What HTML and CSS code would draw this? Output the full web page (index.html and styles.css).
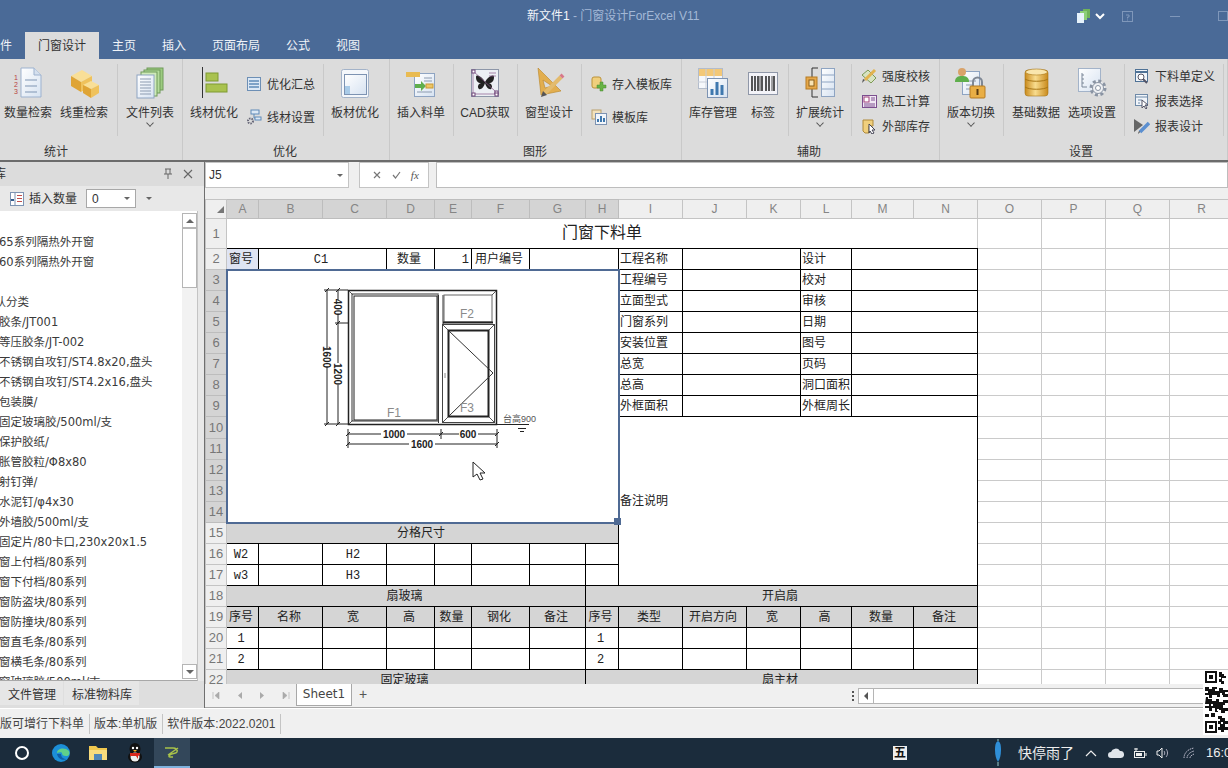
FILE: index.html
```html
<!DOCTYPE html>
<html lang="zh-CN">
<head>
    <meta charset="UTF-8">
    <title>门窗设计ForExcel V11</title>
    <link rel="stylesheet" href="styles.css">
</head>
<body>
    <svg class="defs" width="0" height="0">
        <defs>
            <linearGradient id="gold" x1="0" y1="0" x2="1" y2="0">
                <stop offset="0" stop-color="#c98a1c"/>
                <stop offset=".45" stop-color="#f8dc8e"/>
                <stop offset="1" stop-color="#c98a1c"/>
            </linearGradient>
            <linearGradient id="sheet" x1="0" y1="0" x2="1" y2="1">
                <stop offset="0" stop-color="#ffffff"/>
                <stop offset="1" stop-color="#d6e2f1"/>
            </linearGradient>
        </defs>
    </svg>

    <!-- title bar and tabs -->
    <header class="titlebar">
        <div class="title-row">
            <div class="title-text">新文件1<span class="title-dim"> - 门窗设计ForExcel V11</span></div>
            <div class="win-btns">
                <svg class="win-stack" width="18" height="16" viewBox="0 0 18 16"><rect x="8" y="1" width="7" height="9" fill="#6fb35a"/><rect x="5" y="3" width="7" height="9" fill="#8ccf78"/><rect x="2" y="5" width="7" height="10" fill="#e6f2fb"/></svg>
                <svg class="win-chev" width="10" height="8" viewBox="0 0 10 8"><path d="M1 2l4 4 4-4" fill="none" stroke="#fff" stroke-width="2"/></svg>
                <svg class="win-help" width="11" height="11" viewBox="0 0 11 11"><rect x=".5" y=".5" width="10" height="10" fill="none" stroke="#7f97ba"/><path d="M4 4h3v2H5.500v1.500M5.500 8.500v1" fill="none" stroke="#7f97ba"/></svg>
                <div class="win-min"></div>
                <div class="win-max"></div>
            </div>
        </div>
        <nav class="tabs">
            <span class="tab tab-file">文件</span>
            <span class="tab active">门窗设计</span>
            <span class="tab">主页</span>
            <span class="tab">插入</span>
            <span class="tab">页面布局</span>
            <span class="tab">公式</span>
            <span class="tab">视图</span>
        </nav>
    </header>

    <!-- ribbon -->
    <section class="ribbon">
        <div class="group g-stat">
            <div class="group-body">
                <div class="big">
                    <svg width="32" height="32" viewBox="0 0 32 32"><path d="M9 1h13l7 7v22H9z" fill="url(#sheet)" stroke="#9db2cf"/><path d="M22 1v7h7" fill="#d5e0ee" stroke="#9db2cf"/><path d="M13 13h12M13 19h12M13 25h12" stroke="#7f95b3"/><text x="2" y="13" class="ico-num">1</text><text x="2" y="20" class="ico-num">2</text><text x="2" y="27" class="ico-num">3</text></svg>
                    <span>数量检索</span>
                </div>
                <div class="big">
                    <svg width="32" height="32" viewBox="0 0 32 32"><path d="M3 9l11-6 10 6-11 6z" fill="#f9df97"/><path d="M3 9l10 6v10L3 19z" fill="#dfa435"/><path d="M13 15l11-6v10l-11 6z" fill="#efc25c"/><path d="M15 18l8-4 8 4-8 4z" fill="#f9df97"/><path d="M15 18l8 4v9l-8-5z" fill="#dfa435"/><path d="M23 22l8-4v8l-8 5z" fill="#efc25c"/></svg>
                    <span>线重检索</span>
                </div>
                <div class="sep sep-a"></div>
                <div class="big">
                    <svg width="32" height="32" viewBox="0 0 32 32"><rect x="13" y="1" width="16" height="22" fill="#9ccb80" stroke="#6f9a58"/><rect x="10" y="3" width="16" height="23" fill="#b5dc9c" stroke="#6f9a58"/><rect x="7" y="5" width="16" height="24" fill="#cfeab9" stroke="#6f9a58"/><rect x="3" y="8" width="17" height="23" fill="url(#sheet)" stroke="#8ea4c2"/><path d="M6 12h11M6 15h11M6 18h11M6 21h11M6 24h11M6 27h11" stroke="#8c9bb0"/></svg>
                    <span>文件列表</span>
                    <i class="chev"></i>
                </div>
            </div>
            <div class="group-label">统计</div>
        </div>

        <div class="group g-opt">
            <div class="group-body">
                <div class="big">
                    <svg width="32" height="32" viewBox="0 0 32 32"><path d="M4.500 0v31" stroke="#333"/><rect x="8" y="6" width="12" height="8" fill="#a9c24f" stroke="#7f9a33"/><rect x="8" y="17" width="21" height="8" fill="#a9c24f" stroke="#7f9a33"/></svg>
                    <span>线材优化</span>
                </div>
                <div class="smalls two">
                    <div class="small">
                        <svg width="16" height="16" viewBox="0 0 16 16"><rect x="1.500" y="1.500" width="13" height="13" fill="#dce8f5" stroke="#6d8fb5"/><path d="M3 5h10M3 8h10M3 11h10" stroke="#5f8ab8" stroke-width="1.500"/></svg>
                        <span>优化汇总</span>
                    </div>
                    <div class="small">
                        <svg width="16" height="16" viewBox="0 0 16 16"><rect x="5" y="1" width="8" height="4" fill="#dce8f5" stroke="#5f8ab8"/><rect x="9" y="8" width="6" height="3" fill="#dce8f5" stroke="#5f8ab8"/><path d="M8 5v4h1" fill="none" stroke="#5f8ab8"/><circle cx="4.500" cy="12" r="2.500" fill="none" stroke="#667" stroke-width="2" stroke-dasharray="1.500 1"/></svg>
                        <span>线材设置</span>
                    </div>
                </div>
                <div class="sep sep-b"></div>
                <div class="big">
                    <svg width="32" height="32" viewBox="0 0 32 32"><rect x="2.500" y="2.500" width="27" height="28" rx="2" fill="#f4f7fb" stroke="#a3b3c9"/><rect x="5.500" y="7.500" width="22" height="20" fill="url(#sheet)" stroke="#7d93b2"/><rect x="6" y="19" width="5" height="8" fill="#a9cbe8"/></svg>
                    <span>板材优化</span>
                </div>
            </div>
            <div class="group-label">优化</div>
        </div>

        <div class="group g-shape">
            <div class="group-body">
                <div class="big">
                    <svg width="32" height="32" viewBox="0 0 32 32"><rect x="9.500" y="6.500" width="20" height="23" fill="url(#sheet)" stroke="#8ea4c2"/><path d="M19 11h8M19 14h8M12 25h15" stroke="#8c9bb0"/><rect x="1" y="5" width="14" height="5" fill="#e9bb52"/><path d="M10 17h6v-3l5 5-5 5v-3h-6z" fill="#5fae4c"/><rect x="21" y="17" width="7" height="4" fill="#edc565" stroke="#c99a35"/></svg>
                    <span>插入料单</span>
                </div>
                <div class="sep sep-c"></div>
                <div class="big">
                    <svg width="32" height="32" viewBox="0 0 32 32"><rect x="2.500" y="2.500" width="27" height="27" fill="#eceff4" stroke="#8d96a8"/><path d="M16 15C13 9 7 7 7 10c0 4 2 6 5 6-3 1-4 4-2 6 2 1 5-2 6-6 1 4 4 7 6 6 2-2 1-5-2-6 3 0 5-2 5-6 0-3-6-1-9 5z" fill="#222"/><path d="M4 4l22 20v3H4zM20 6h7M20 9h7" fill="none" stroke="#8a5a8a" stroke-width=".7"/><rect x="3" y="3" width="3" height="3" fill="#fff" stroke="#70467a"/><rect x="26" y="24" width="3" height="3" fill="#fff" stroke="#70467a"/><rect x="3" y="26" width="3" height="3" fill="#fff" stroke="#70467a"/><rect x="26" y="26" width="3" height="3" fill="#fff" stroke="#70467a"/></svg>
                    <span>CAD获取</span>
                </div>
                <div class="sep sep-c"></div>
                <div class="big">
                    <svg width="32" height="32" viewBox="0 0 32 32"><path fill-rule="evenodd" d="M5 1l23 23-20 4zM10 13l2 8 7-2z" fill="#e2ae4f" stroke="#b98526" stroke-width=".6"/><path d="M28 10L12 26" stroke="#e3bb6d" stroke-width="4"/><path d="M30 8l-2 2" stroke="#d8788a" stroke-width="4"/><path d="M10 24l-2 6 6-2z" fill="#555"/></svg>
                    <span>窗型设计</span>
                </div>
                <div class="sep sep-c"></div>
                <div class="smalls two pad-8">
                    <div class="small">
                        <svg width="16" height="16" viewBox="0 0 16 16"><rect x="1" y="1" width="9" height="11" rx="2" fill="#f0cf7d" stroke="#bb9239"/><path d="M9 6h3v3h3v3h-3v3H9v-3H6V9h3z" fill="#67b345" stroke="#4b8b30" stroke-width=".5"/></svg>
                        <span>存入模板库</span>
                    </div>
                    <div class="small">
                        <svg width="16" height="16" viewBox="0 0 16 16"><rect x="1" y="1" width="9" height="9" fill="#f3e2bd" stroke="#b9a06d"/><rect x="4.500" y="4.500" width="11" height="11" fill="#f2f6fb" stroke="#7d93b2"/><path d="M7 13V10M10 13V7M13 13V9" stroke="#3f78ae" stroke-width="2"/></svg>
                        <span>模板库</span>
                    </div>
                </div>
            </div>
            <div class="group-label">图形</div>
        </div>

        <div class="group g-aux">
            <div class="group-body">
                <div class="big">
                    <svg width="32" height="32" viewBox="0 0 32 32"><rect x="1.500" y="1.500" width="24" height="20" fill="#f6f8fb" stroke="#b3bccb"/><rect x="2" y="2" width="23" height="7" fill="#f3c877"/><path d="M1 15h24M9 2v19M17 2v19" stroke="#c9ced8"/><rect x="10.500" y="11.500" width="20" height="19" fill="url(#sheet)" stroke="#7d93b2"/><path d="M15 28v-6M20 28V15M25 28V18" stroke="#3f78ae" stroke-width="3"/></svg>
                    <span>库存管理</span>
                </div>
                <div class="big big-sm">
                    <svg width="32" height="32" viewBox="0 0 32 32"><rect x="1.500" y="5.500" width="29" height="22" fill="#f3f3f8" stroke="#8f97a8"/><path d="M5 9v15M8 9v15M11 9v15M15 9v15M19 9v15M22 9v15M27 9v15" stroke="#222" stroke-width="1.500"/><path d="M13 9v15M25 9v15" stroke="#222" stroke-width=".8"/></svg>
                    <span>标签</span>
                </div>
                <div class="sep sep-d"></div>
                <div class="big">
                    <svg width="32" height="32" viewBox="0 0 32 32"><rect x="17.500" y="1.500" width="13" height="28" fill="url(#sheet)" stroke="#8ea4c2"/><path d="M18 8h12M18 15h12M18 22h12" stroke="#8ea4c2"/><path d="M14 1H8v29h6" fill="none" stroke="#333"/><rect x="2" y="10" width="11" height="12" fill="#e6a84a" stroke="#b57b22"/><rect x="5" y="13" width="5" height="6" fill="#f8e3b4" stroke="#8a5f1b"/></svg>
                    <span>扩展统计</span>
                    <i class="chev"></i>
                </div>
                <div class="sep sep-d"></div>
                <div class="smalls three pad-8">
                    <div class="small">
                        <svg width="16" height="16" viewBox="0 0 16 16"><path d="M1 7l6-5 8 8-5 5z" fill="#d7e3c2" stroke="#7d9a55"/><path d="M14 2L4 12" stroke="#e2b34f" stroke-width="3"/><path d="M4 12l-3 3 1-4z" fill="#555"/></svg>
                        <span>强度校核</span>
                    </div>
                    <div class="small">
                        <svg width="16" height="16" viewBox="0 0 16 16"><rect x="1.500" y="2.500" width="14" height="12" fill="#f2e9f5" stroke="#7c4f8f"/><rect x="3" y="4" width="5" height="5" fill="#fff" stroke="#a0417a"/><path d="M10 5h4M10 7h4M3 11h11M3 13h11" stroke="#7c4f8f"/></svg>
                        <span>热工计算</span>
                    </div>
                    <div class="small">
                        <svg width="16" height="16" viewBox="0 0 16 16"><path d="M2 2h10v6H8v7H4l-2-2z" fill="#f0cf7d" stroke="#b08a3a"/><path d="M8 6l6 6h-3l2 3-2 1-2-3-1 2z" fill="#fff" stroke="#445"/></svg>
                        <span>外部库存</span>
                    </div>
                </div>
            </div>
            <div class="group-label">辅助</div>
        </div>

        <div class="group g-set">
            <div class="group-body">
                <div class="big">
                    <svg width="32" height="32" viewBox="0 0 32 32"><rect x="7.500" y="4.500" width="17" height="23" fill="url(#sheet)" stroke="#8ea4c2"/><path d="M11 14h10M11 18h6M11 22h6" stroke="#8c9bb0"/><circle cx="7" cy="5" r="4" fill="#d9a36a"/><path d="M0 15c0-5 3-6 7-6s7 1 7 6z" fill="#5fae4c"/><path d="M18 19v-4a4.500 4.500 0 0 1 9 0v4" fill="none" stroke="#7e8794" stroke-width="2"/><rect x="15" y="19" width="15" height="12" rx="1" fill="#e9ae45" stroke="#b57b22"/><rect x="21.500" y="22" width="2" height="6" fill="#5a3a10"/></svg>
                    <span>版本切换</span>
                    <i class="chev"></i>
                </div>
                <div class="sep sep-e"></div>
                <div class="big">
                    <svg width="32" height="32" viewBox="0 0 32 32"><rect x="5" y="3" width="23" height="26" rx="3" fill="url(#gold)" stroke="#a87616" stroke-width=".6"/><ellipse cx="16.500" cy="5" rx="11" ry="3" fill="#f9e6ad" stroke="#a87616" stroke-width=".6"/><path d="M5 12c4 3 19 3 23 0M5 20c4 3 19 3 23 0" fill="none" stroke="#a87616"/></svg>
                    <span>基础数据</span>
                </div>
                <div class="big">
                    <svg width="32" height="32" viewBox="0 0 32 32"><rect x="2.500" y="1.500" width="22" height="23" fill="url(#sheet)" stroke="#a3b3c9"/><path d="M6 6v14h5M6 8h2M6 12h2M6 16h2" fill="none" stroke="#7b8798"/><circle cx="22" cy="21" r="7" fill="#eef0f3" stroke="#8a94a3" stroke-width="3" stroke-dasharray="3 2.500"/><circle cx="22" cy="21" r="5.500" fill="#eef0f3" stroke="#8a94a3"/><circle cx="22" cy="21" r="2.500" fill="#fff" stroke="#8a94a3"/></svg>
                    <span>选项设置</span>
                </div>
                <div class="sep sep-f"></div>
                <div class="smalls three pad-10">
                    <div class="small">
                        <svg width="16" height="16" viewBox="0 0 16 16"><rect x="1.500" y="1.500" width="12" height="12" fill="#f1f5fa" stroke="#4f7296"/><path d="M1 4h13" stroke="#4f7296" stroke-width="2"/><circle cx="7" cy="9" r="3" fill="#fff" stroke="#556"/><path d="M9 11l4 4" stroke="#556" stroke-width="2"/></svg>
                        <span>下料单定义</span>
                    </div>
                    <div class="small">
                        <svg width="16" height="16" viewBox="0 0 16 16"><rect x="1.500" y="1.500" width="12" height="11" fill="#f1f5fa" stroke="#6f8aa8"/><path d="M1 4h13M4 7h4M4 10h2" stroke="#6f8aa8"/><path d="M8 7l6 5h-3l2 3-1 1-2-3-2 2z" fill="#fff" stroke="#556"/></svg>
                        <span>报表选择</span>
                    </div>
                    <div class="small">
                        <svg width="16" height="16" viewBox="0 0 16 16"><path d="M0 1l9 6-9 7z" fill="#666"/><path d="M15 5L6 14" stroke="#5b8fd0" stroke-width="3.500"/><path d="M6 14l-2 2 1-3z" fill="#333"/></svg>
                        <span>报表设计</span>
                    </div>
                </div>
                <div class="sep sep-g"></div>
            </div>
            <div class="group-label">设置</div>
        </div>
    </section>

    <main class="main">
        <!-- left panel -->
        <aside class="panel">
            <div class="panel-head">
                <span class="panel-title">库</span>
                <svg class="pin" width="10" height="12" viewBox="0 0 10 12"><path d="M2 1h6M3 1v5M7 1v5M1 6h8M5 6v5" fill="none" stroke="#666"/></svg>
                <svg class="close" width="10" height="10" viewBox="0 0 10 10"><path d="M1 1l8 8M9 1l-8 8" stroke="#666" stroke-width="1.100"/></svg>
            </div>
            <div class="panel-tools">
                <svg class="tool-ico" width="14" height="14" viewBox="0 0 14 14"><rect x=".5" y=".5" width="13" height="13" fill="#fff" stroke="#7d93b2"/><path d="M5 1v12" stroke="#7d93b2"/><path d="M7 3.500h5M7 6.500h5M7 9.500h5" stroke="#c0504d"/><path d="M1 8h3" stroke="#345a8a" stroke-width="2"/></svg>
                <span class="tool-text">插入数量</span>
                <div class="combo"><span>0</span><i></i></div>
                <i class="tool-drop"></i>
            </div>
            <div class="list-wrap">
                <ul class="list">
                    <li>65系列隔热外开窗</li>
                    <li>60系列隔热外开窗</li>
                    <li>&nbsp;</li>
                    <li class="cut">默认分类</li>
                    <li>胶条/JT001</li>
                    <li>等压胶条/JT-002</li>
                    <li>不锈钢自攻钉/ST4.8x20,盘头</li>
                    <li>不锈钢自攻钉/ST4.2x16,盘头</li>
                    <li>包装膜/</li>
                    <li>固定玻璃胶/500ml/支</li>
                    <li>保护胶纸/</li>
                    <li>胀管胶粒/Φ8x80</li>
                    <li>射钉弹/</li>
                    <li>水泥钉/φ4x30</li>
                    <li>外墙胶/500ml/支</li>
                    <li>固定片/80卡口,230x20x1.5</li>
                    <li>窗上付档/80系列</li>
                    <li>窗下付档/80系列</li>
                    <li>窗防盗块/80系列</li>
                    <li>窗防撞块/80系列</li>
                    <li>窗直毛条/80系列</li>
                    <li>窗横毛条/80系列</li>
                    <li>窗玻璃胶/500ml/支</li>
                </ul>
                <div class="vscroll">
                    <div class="vs-btn"><i class="up"></i></div>
                    <div class="vs-thumb"></div>
                    <div class="vs-track"></div>
                    <div class="vs-btn"><i class="down"></i></div>
                </div>
            </div>
            <div class="panel-tabs">
                <span class="ptab">文件管理</span>
                <span class="ptab">标准物料库</span>
            </div>
        </aside>

        <!-- sheet -->
        <section class="workbook">
            <div class="formula">
                <div class="namebox"><span>J5</span><i></i></div>
                <div class="fx-btns">
                    <svg width="8" height="8" viewBox="0 0 8 8"><path d="M1 1l6 6M7 1L1 7" stroke="#777" stroke-width="1.200"/></svg>
                    <svg width="9" height="8" viewBox="0 0 9 8"><path d="M1 4l2.500 3L8 1" fill="none" stroke="#777" stroke-width="1.200"/></svg>
                    <span class="fx">fx</span>
                </div>
                <div class="fx-input"></div>
            </div>
            <div class="sheet-wrap">
                <table class="sheet">
                    <colgroup>
                        <col class="c-rh"><col class="c32"><col class="c64"><col class="c64"><col class="c48"><col class="c37"><col class="c58"><col class="c56"><col class="c33"><col class="c64"><col class="c64"><col class="c54"><col class="c51"><col class="c62"><col class="c64"><col class="c64"><col class="c64"><col class="c64"><col class="c64">
                    </colgroup>
                    <tr class="r-head">
                        <th class="corner"><i></i></th>
                        <th class="sel">A</th><th class="sel">B</th><th class="sel">C</th><th class="sel">D</th><th class="sel">E</th><th class="sel">F</th><th class="sel">G</th><th class="sel">H</th>
                        <th>I</th><th>J</th><th>K</th><th>L</th><th>M</th><th>N</th><th>O</th><th>P</th><th>Q</th><th>R</th>
                    </tr>
                    <tr class="r-title">
                        <th class="rn">1</th>
                        <td colspan="14" class="doc-title">门窗下料单</td>
                        <td></td><td></td><td></td><td></td>
                    </tr>
                    <tr>
                        <th class="rn">2</th>
                        <td class="b ctr tint">窗号</td><td colspan="2" class="b ctr">C1</td><td class="b ctr">数量</td><td class="b rgt">1</td><td class="b ctr">用户编号</td><td colspan="2" class="b"></td>
                        <td class="b">工程名称</td><td colspan="2" class="b"></td><td class="b">设计</td><td colspan="2" class="b"></td>
                        <td></td><td></td><td></td><td></td>
                    </tr>
                    <tr>
                        <th class="rn sel">3</th>
                        <td colspan="8" rowspan="12" class="drawing">
                            <svg class="window" width="392" height="252" viewBox="227 269 392 252">
                                <g fill="none" stroke="#222">
                                    <rect x="348.500" y="289.500" width="148" height="134" stroke-width="1.500"/>
                                    <rect x="352" y="293" width="86" height="127" stroke="#777" stroke-width="1.500"/>
                                    <rect x="354" y="295" width="83" height="124" stroke-width="1"/>
                                    <path d="M349 290l4 4M496 290l-4 4M349 423l4-4" stroke="#555"/>
                                    <path d="M438.500 294v128M443 294v29" stroke="#333"/>
                                    <rect x="444" y="294" width="48" height="27" stroke="#666"/>
                                    <path d="M443 321.500h50" stroke-width="2"/>
                                    <rect x="442.500" y="323.500" width="52" height="98" stroke="#444"/>
                                    <rect x="448.500" y="329.500" width="40" height="86" stroke-width="2"/>
                                    <path d="M443 324l5 5M494 324l-5 5M443 421l5-5M494 421l-5-5" stroke="#555"/>
                                    <path d="M449 330l44 42-44 43" stroke="#333"/>
                                    <path d="M445 372v5" stroke="#888"/>
                                    <path d="M327 289v58M327 366v57M338 289v10M338 314v48M338 384v39M324 289h24M335 322h13M324 423h24"/>
                                    <path d="M325 291l4-4M336 291l4-4M325 425l4-4M336 425l4-4M336 324l4-4"/>
                                    <path d="M348 433h33M407 433h52M478 433h19M348 443h61M435 443h62"/>
                                    <path d="M348 428v19M441 428v10M497 428v19"/>
                                    <path d="M346 435l4-4M439 435l4-4M495 435l4-4M346 445l4-4M495 445l4-4"/>
                                    <path d="M497 423.500h32M518 427.500h8M520 430.500h4"/>
                                </g>
                                <g class="dim">
                                    <text x="394" y="437">1000</text>
                                    <text x="468" y="437">600</text>
                                    <text x="422" y="447">1600</text>
                                    <text transform="translate(323 356) rotate(90)">1600</text>
                                    <text transform="translate(334 373) rotate(90)">1200</text>
                                    <text transform="translate(334 306) rotate(90)">400</text>
                                </g>
                                <g class="fname">
                                    <text x="394" y="416">F1</text>
                                    <text x="467" y="317">F2</text>
                                    <text x="467" y="411">F3</text>
                                </g>
                                <text class="sill" x="503" y="421">台高900</text>
                            </svg>
                        </td>
                        <td class="b">工程编号</td><td colspan="2" class="b"></td><td class="b">校对</td><td colspan="2" class="b"></td>
                        <td></td><td></td><td></td><td></td>
                    </tr>
                    <tr>
                        <th class="rn sel">4</th>
                        <td class="b">立面型式</td><td colspan="2" class="b"></td><td class="b">审核</td><td colspan="2" class="b"></td>
                        <td></td><td></td><td></td><td></td>
                    </tr>
                    <tr>
                        <th class="rn sel">5</th>
                        <td class="b">门窗系列</td><td colspan="2" class="b"></td><td class="b">日期</td><td colspan="2" class="b"></td>
                        <td></td><td></td><td></td><td></td>
                    </tr>
                    <tr>
                        <th class="rn sel">6</th>
                        <td class="b">安装位置</td><td colspan="2" class="b"></td><td class="b">图号</td><td colspan="2" class="b"></td>
                        <td></td><td></td><td></td><td></td>
                    </tr>
                    <tr>
                        <th class="rn sel">7</th>
                        <td class="b">总宽</td><td colspan="2" class="b"></td><td class="b">页码</td><td colspan="2" class="b"></td>
                        <td></td><td></td><td></td><td></td>
                    </tr>
                    <tr>
                        <th class="rn sel">8</th>
                        <td class="b">总高</td><td colspan="2" class="b"></td><td class="b">洞口面积</td><td colspan="2" class="b"></td>
                        <td></td><td></td><td></td><td></td>
                    </tr>
                    <tr>
                        <th class="rn sel">9</th>
                        <td class="b">外框面积</td><td colspan="2" class="b"></td><td class="b">外框周长</td><td colspan="2" class="b"></td>
                        <td></td><td></td><td></td><td></td>
                    </tr>
                    <tr>
                        <th class="rn sel">10</th>
                        <td colspan="6" rowspan="8" class="b">备注说明</td>
                        <td></td><td></td><td></td><td></td>
                    </tr>
                    <tr><th class="rn sel">11</th><td></td><td></td><td></td><td></td></tr>
                    <tr><th class="rn sel">12</th><td></td><td></td><td></td><td></td></tr>
                    <tr><th class="rn sel">13</th><td></td><td></td><td></td><td></td></tr>
                    <tr><th class="rn sel">14</th><td></td><td></td><td></td><td></td></tr>
                    <tr>
                        <th class="rn">15</th>
                        <td colspan="8" class="b ctr grey">分格尺寸</td>
                        <td></td><td></td><td></td><td></td>
                    </tr>
                    <tr>
                        <th class="rn">16</th>
                        <td class="b ctr">W2</td><td class="b"></td><td class="b ctr">H2</td><td class="b"></td><td class="b"></td><td class="b"></td><td class="b"></td><td class="b"></td>
                        <td></td><td></td><td></td><td></td>
                    </tr>
                    <tr>
                        <th class="rn">17</th>
                        <td class="b ctr">w3</td><td class="b"></td><td class="b ctr">H3</td><td class="b"></td><td class="b"></td><td class="b"></td><td class="b"></td><td class="b"></td>
                        <td></td><td></td><td></td><td></td>
                    </tr>
                    <tr>
                        <th class="rn">18</th>
                        <td colspan="7" class="b ctr grey">扇玻璃</td><td colspan="7" class="b ctr grey">开启扇</td>
                        <td></td><td></td><td></td><td></td>
                    </tr>
                    <tr>
                        <th class="rn">19</th>
                        <td class="b ctr grey">序号</td><td class="b ctr grey">名称</td><td class="b ctr grey">宽</td><td class="b ctr grey">高</td><td class="b ctr grey">数量</td><td class="b ctr grey">钢化</td><td class="b ctr grey">备注</td>
                        <td class="b ctr grey">序号</td><td class="b ctr grey">类型</td><td class="b ctr grey">开启方向</td><td class="b ctr grey">宽</td><td class="b ctr grey">高</td><td class="b ctr grey">数量</td><td class="b ctr grey">备注</td>
                        <td></td><td></td><td></td><td></td>
                    </tr>
                    <tr>
                        <th class="rn">20</th>
                        <td class="b ctr">1</td><td class="b"></td><td class="b"></td><td class="b"></td><td class="b"></td><td class="b"></td><td class="b"></td>
                        <td class="b ctr">1</td><td class="b"></td><td class="b"></td><td class="b"></td><td class="b"></td><td class="b"></td><td class="b"></td>
                        <td></td><td></td><td></td><td></td>
                    </tr>
                    <tr>
                        <th class="rn">21</th>
                        <td class="b ctr">2</td><td class="b"></td><td class="b"></td><td class="b"></td><td class="b"></td><td class="b"></td><td class="b"></td>
                        <td class="b ctr">2</td><td class="b"></td><td class="b"></td><td class="b"></td><td class="b"></td><td class="b"></td><td class="b"></td>
                        <td></td><td></td><td></td><td></td>
                    </tr>
                    <tr>
                        <th class="rn">22</th>
                        <td colspan="7" class="b ctr grey">固定玻璃</td><td colspan="7" class="b ctr grey">扇主材</td>
                        <td></td><td></td><td></td><td></td>
                    </tr>
                </table>
            </div>
            <div class="sheet-bar">
                <div class="nav-arrows">
                    <svg width="8" height="7" viewBox="0 0 8 7"><path d="M1 0v7M7 0L3 3.500 7 7z" fill="#aaa" stroke="#aaa" stroke-width=".6"/></svg>
                    <svg width="5" height="7" viewBox="0 0 5 7"><path d="M5 0L1 3.500 5 7z" fill="#aaa"/></svg>
                    <svg width="5" height="7" viewBox="0 0 5 7"><path d="M0 0l4 3.500L0 7z" fill="#aaa"/></svg>
                    <svg width="8" height="7" viewBox="0 0 8 7"><path d="M7 0v7M1 0l4 3.500L1 7z" fill="#aaa" stroke="#aaa" stroke-width=".6"/></svg>
                </div>
                <div class="sheet-tab">Sheet1</div>
                <div class="sheet-add">+</div>
                <div class="hs-dots"></div>
                <div class="hs-btn"><i></i></div>
                <div class="hs-track"></div>
            </div>
        </section>
    </main>

    <footer class="status">
        <span>版可增行下料单</span>
        <span>版本:单机版</span>
        <span>软件版本:2022.0201</span>
    </footer>

    <div class="taskbar">
        <svg class="task-ico start" width="16" height="16" viewBox="0 0 16 16"><circle cx="8" cy="8" r="6" fill="none" stroke="#fff" stroke-width="2"/></svg>
        <svg class="task-ico edge" width="18" height="18" viewBox="0 0 18 18"><circle cx="9" cy="9" r="9" fill="#1c8fd8"/><path d="M5 9c0-5 8-6 12-2 1 3 0 5-3 5-3 0-4-1-4-3 0-1-3-1-5 0z" fill="#5fd08a"/><path d="M5 10c1 5 6 7 10 5-4 0-6-2-6-5z" fill="#0f5ea8"/></svg>
        <svg class="task-ico folder" width="18" height="16" viewBox="0 0 18 16"><path d="M0 1h7l2 2h9v12H0z" fill="#f0c84f"/><path d="M0 5h18v10H0z" fill="#f7dc7e"/><rect x="5" y="9" width="8" height="6" fill="#4f87b8"/></svg>
        <svg class="task-ico qq" width="16" height="20" viewBox="0 0 16 20"><ellipse cx="8" cy="6" rx="5.500" ry="6" fill="#111"/><ellipse cx="8" cy="14" rx="7" ry="5.500" fill="#111"/><ellipse cx="8" cy="14" rx="4.500" ry="4.500" fill="#eee"/><path d="M3 10h10v2l-2 1v3l-2-3H3z" fill="#d8261c"/><circle cx="6" cy="5" r="1.200" fill="#fff"/><circle cx="10" cy="5" r="1.200" fill="#fff"/><path d="M6 7h4l-2 2z" fill="#f2a81d"/></svg>
        <div class="task-active">
            <svg width="16" height="12" viewBox="0 0 16 12"><path d="M1 2h8c3 0 5 2 4 4s-5 1-7 3-1 2 3 2M14 2L4 9" fill="none" stroke="#a8c24a" stroke-width="1.500"/></svg>
        </div>
        <div class="tray">
            <span class="ime">五</span>
            <svg class="umbrella" width="10" height="30" viewBox="0 0 10 30"><path d="M5 3c2 1 3 3 3 9 0 5-1 9-3 12-2-3-3-7-3-12 0-6 1-8 3-9z" fill="#2f8fd8"/><path d="M5 1v2M5 24v4" stroke="#9cc"/></svg>
            <span class="weather">快停雨了</span>
            <svg width="12" height="8" viewBox="0 0 12 8"><path d="M1 7l5-5 5 5" fill="none" stroke="#eee" stroke-width="1.200"/></svg>
            <svg class="cloud" width="16" height="10" viewBox="0 0 16 10"><path d="M3 10a3 3 0 0 1 0-6 5 5 0 0 1 9-1 3.500 3.500 0 0 1 1 7z" fill="#dfe4ea"/></svg>
            <svg class="batt" width="14" height="12" viewBox="0 0 14 12"><path d="M3 1v3M1 2h4" stroke="#eee"/><rect x="1.500" y="4.500" width="10" height="6" fill="none" stroke="#eee"/><rect x="3" y="6" width="6" height="3" fill="#eee"/><path d="M13 6v3" stroke="#eee"/></svg>
            <svg class="spk" width="14" height="12" viewBox="0 0 14 12"><path d="M1 4h2l3-3v10L3 8H1z" fill="none" stroke="#eee"/><path d="M8 4c1 1 1 3 0 4M10 2c2 2 2 6 0 8" fill="none" stroke="#aab"/></svg>
            <svg class="wifi" width="14" height="12" viewBox="0 0 14 12"><path d="M1 11c0-5 4-9 10-10M4 11c0-3 3-6 7-7M7 11c0-2 2-3 4-4" fill="none" stroke="#bbc" stroke-dasharray="1.500 .7"/></svg>
            <span class="clock">16:0</span>
        </div>
    </div>

    <!-- things lying over the page -->
    <svg class="cursor" width="14" height="20" viewBox="0 0 14 20"><path d="M1 1v15l4-3 3 6 3-1-3-6h5z" fill="#fff" stroke="#222"/></svg>
    <svg class="qr" width="25" height="65" viewBox="0 0 25 65">
        <rect width="25" height="65" fill="#fff"/>
        <g fill="none" stroke="#111" stroke-width="2">
            <rect x="3" y="2" width="10" height="10"/>
            <rect x="3" y="52" width="10" height="10"/>
        </g>
        <rect x="6" y="5" width="4" height="4" fill="#111"/>
        <rect x="6" y="55" width="4" height="4" fill="#111"/>
        <path d="M16 2h3v2h2v2h2v2h-4v3h2v3h-3v-2h-2V9h2V7h-2zM2 17h4v2h3v-2h5v2h-2v2h4v-3h4v2h5v2h-3v2h3v3h-5v-2h-3v2h-3v-2H9v3H6v-3H2v-2h3v-2H2zM3 27h2v2h4v2h4v-2h3v3h4v-2h5v3h-3v2h-2v3h5v3h-3v2h-4v-3h-3v2h-3v-4H9v3H6v-3H2v-2h4v-2H2zM15 46h4v2h3v3h3v3h-3v3h3v3h-4v2h-3v-2h-3v-3h2v-3h-2v-3h2v-2h-2zM2 44h4v3H2zM8 43h4v4H8z" fill="#111" fill-rule="evenodd"/>
        <path d="M20 8h2v2h-2zM17 23h2v2h-2zM8 34h2v2H8zM14 39h2v2h-2zM18 52h2v2h-2z" fill="#fff"/>
    </svg>
</body>
</html>
```

FILE: styles.css
```css
* {
    box-sizing: border-box;
}

html, body {
    margin: 0;
    height: 768px;
    overflow: hidden;
}

body {
    width: 1228px;
    display: flex;
    flex-direction: column;
    position: relative;
    font-family: "Liberation Sans", "Noto Sans CJK SC", sans-serif;
    font-size: 12px;
    line-height: 16px;
    color: #333;
    background-color: #f0f0f0;
}

.defs {
    flex: none;
}

/* title bar */
.titlebar {
    height: 59px;
    flex: none;
    background-color: #4a6a97;
    color: #fff;
}

.title-row {
    height: 32px;
    display: flex;
    align-items: center;
}

.title-text {
    margin-left: 527px;
    width: 520px;
    color: #f2f5fa;
}

.title-dim {
    color: #a3b8d6;
}

.win-btns {
    display: flex;
    align-items: center;
    flex: 1;
}

.win-stack {
    margin-left: 31px;
}

.win-chev {
    margin-left: 2px;
}

.win-help {
    margin-left: 17px;
}

.win-min {
    width: 10px;
    height: 1px;
    margin-left: 37px;
    background-color: #7f97ba;
}

.win-max {
    width: 10px;
    height: 10px;
    margin-left: 38px;
    border: 1px solid #7f97ba;
}

.tabs {
    height: 27px;
    display: flex;
}

.tab {
    padding: 6px 13px 0;
    color: #f0f3f8;
}

.tab-file {
    margin-left: -25px;
}

.tab.active {
    background-color: #dcdcdc;
    color: #333;
}

/* ribbon */
.ribbon {
    height: 103px;
    flex: none;
    display: flex;
    background-color: #dcdcdc;
    border-bottom: 2px solid #6c6c6c;
}

.group {
    display: flex;
    flex-direction: column;
    border-right: 1px solid #c9c9c9;
}

.g-stat {
    width: 183px;
}

.g-stat .group-label {
    width: 112px;
}

.g-opt {
    width: 207px;
    padding-left: 3px;
}

.g-opt .group-label {
    padding-right: 5px;
}

.g-shape {
    width: 292px;
    padding-left: 3px;
}

.g-shape .group-label {
    padding-right: 4px;
}

.g-aux {
    width: 258px;
    padding-left: 3px;
}

.g-aux .group-label {
    padding-right: 6px;
}

.g-set {
    width: 288px;
    padding-left: 3px;
}

.g-set .group-label {
    padding-right: 8px;
}

.group-body {
    height: 83px;
    display: flex;
}

.group-label {
    height: 18px;
    text-align: center;
    line-height: 18px;
    padding-top: 1px;
}

.big {
    width: 56px;
    flex: none;
    display: flex;
    flex-direction: column;
    align-items: center;
    padding-top: 8px;
    white-space: nowrap;
}

.big-sm {
    width: 44px;
}

.big svg {
    flex: none;
}

.big span {
    margin-top: 6px;
}

.chev {
    width: 6px;
    height: 6px;
    margin-top: -1px;
    border-right: 1px solid #555;
    border-bottom: 1px solid #555;
    transform: rotate(45deg) scale(.9);
}

.ico-num {
    font-size: 7px;
    fill: #b8433f;
}

.sep {
    width: 1px;
    height: 72px;
    margin-top: 5px;
    flex: none;
    background-color: #c9c9c9;
}

.sep-a {
    margin-left: 5px;
    margin-right: 4px;
}

.sep-b {
    margin-left: 8px;
    margin-right: 3px;
}

.sep-c {
    margin-left: 4px;
    margin-right: 3px;
}

.sep-d {
    margin-left: 3px;
    margin-right: 3px;
}

.sep-e {
    margin-left: 4px;
    margin-right: 4px;
}

.sep-f {
    margin-left: 4px;
}

.sep-g {
    margin-left: 8px;
}

.smalls {
    display: flex;
    flex-direction: column;
    flex: none;
    margin-left: 4px;
}

.pad-8 {
    margin-left: 6px;
}

.pad-10 {
    margin-left: 9px;
}

.two {
    padding-top: 8px;
}

.two .small {
    height: 33px;
}

.three {
    padding-top: 4px;
}

.three .small {
    height: 25px;
}

.small {
    display: flex;
    align-items: center;
    gap: 5px;
    white-space: nowrap;
}

.small span {
    padding-top: 2px;
}

/* main area */
.main {
    height: 546px;
    flex: none;
    display: flex;
}

.panel {
    width: 205px;
    flex: none;
    display: flex;
    flex-direction: column;
    background-color: #e8e8e8;
    border-right: 1px solid #6f6f6f;
    padding-right: 6px;
    overflow: hidden;
}

.panel-head {
    height: 24px;
    flex: none;
    display: flex;
    align-items: center;
    background-color: #dcdcdc;
    margin-right: -6px;
}

.panel-title {
    margin-left: -6px;
}

.pin {
    margin-left: 157px;
}

.close {
    margin-left: 10px;
}

.panel-tools {
    height: 25px;
    flex: none;
    display: flex;
    align-items: center;
}

.tool-ico {
    margin-left: 10px;
}

.tool-text {
    margin-left: 5px;
}

.combo {
    width: 50px;
    height: 19px;
    margin-left: 9px;
    display: flex;
    align-items: center;
    justify-content: space-between;
    padding: 0 5px;
    background-color: #fff;
    border: 1px solid #a8a8a8;
}

.combo i, .tool-drop, .namebox i {
    width: 0;
    height: 0;
    border-left: 3px solid transparent;
    border-right: 3px solid transparent;
    border-top: 3px solid #666;
}

.tool-drop {
    margin-left: 10px;
}

.list-wrap {
    flex: 1;
    min-height: 0;
    display: flex;
    background-color: #fff;
    border-bottom: 1px solid #a8a8a8;
    border-right: 1px solid #c4c4c4;
}

.list {
    flex: 1;
    min-width: 0;
    margin: 0;
    padding: 21px 0 0;
    list-style: none;
    overflow: hidden;
    font-family: "DejaVu Sans", "Noto Sans CJK SC", sans-serif;
    font-size: 11.500px;
    color: #3a3a3a;
}

.list li {
    height: 20px;
    line-height: 20px;
    white-space: nowrap;
    margin-left: -1px;
}

.list .cut {
    margin-left: -17px;
}

.vscroll {
    width: 15px;
    flex: none;
    display: flex;
    flex-direction: column;
    margin-top: 2px;
    margin-bottom: 1px;
    background-color: #f2f2f2;
}

.vs-btn {
    height: 15px;
    flex: none;
    display: flex;
    align-items: center;
    justify-content: center;
    background-color: #fff;
    border: 1px solid #b5b5b5;
}

.vs-btn i {
    width: 0;
    height: 0;
    border-left: 4px solid transparent;
    border-right: 4px solid transparent;
}

.vs-btn .up {
    border-bottom: 4px solid #666;
}

.vs-btn .down {
    border-top: 4px solid #666;
}

.vs-thumb {
    height: 60px;
    flex: none;
    background-color: #fff;
    border: 1px solid #b5b5b5;
}

.vs-track {
    flex: 1;
}

.panel-tabs {
    height: 27px;
    flex: none;
    display: flex;
    gap: 1px;
    background-color: #dedede;
    margin-right: -6px;
}

.ptab {
    padding: 6px 7px 0 8px;
    height: 24px;
    background-color: #e6e6e6;
}

.workbook {
    flex: 1;
    min-width: 0;
    display: flex;
    flex-direction: column;
}

.formula {
    height: 37px;
    flex: none;
    display: flex;
    align-items: flex-start;
    background-color: #efefef;
}

.namebox {
    width: 144px;
    height: 26px;
    display: flex;
    align-items: center;
    justify-content: space-between;
    padding: 0 5px 0 3px;
    background-color: #fff;
    border: 1px solid #c4c4c4;
}

.fx-btns {
    width: 70px;
    height: 26px;
    margin-left: 10px;
    display: flex;
    align-items: center;
    justify-content: space-around;
    padding: 0 4px 0 8px;
    background-color: #fff;
    border: 1px solid #c4c4c4;
}

.fx {
    font-family: "Liberation Serif", serif;
    font-style: italic;
    font-size: 11px;
    color: #555;
}

.fx-input {
    flex: 1;
    height: 26px;
    margin-left: 7px;
    background-color: #fff;
    border: 1px solid #bdbdbd;
}

.sheet-wrap {
    flex: 1;
    min-height: 0;
    overflow: hidden;
    background-color: #fff;
}

.sheet {
    table-layout: fixed;
    width: 1028px;
    border-collapse: collapse;
    font-family: "Liberation Mono", "Noto Sans CJK SC", monospace;
    color: #222;
}

.c-rh { width: 21px; }
.c32 { width: 32px; }
.c33 { width: 33px; }
.c37 { width: 37px; }
.c48 { width: 48px; }
.c51 { width: 51px; }
.c54 { width: 54px; }
.c56 { width: 56px; }
.c58 { width: 58px; }
.c62 { width: 62px; }
.c64 { width: 64px; }

.sheet tr {
    height: 21px;
}

.sheet .r-head {
    height: 19px;
}

.sheet .r-title {
    height: 30px;
}

.sheet td {
    padding: 1px 0 0 1px;
    border: 1px solid #cacaca;
    overflow: hidden;
    white-space: nowrap;
}

.sheet th {
    padding: 0;
    font-weight: normal;
    font-family: "Liberation Sans", sans-serif;
    color: #858585;
    background-color: #efefef;
    border: 1px solid #c4c4c4;
}

.sheet th.sel {
    background-color: #d4d4d4;
    border-color: #bdbdbd;
}

.rn {
    font-size: 13px;
    color: #777 !important;
}

.corner {
    text-align: right;
}

.corner i {
    display: inline-block;
    width: 0;
    height: 0;
    margin-right: 2px;
    border-left: 7px solid transparent;
    border-bottom: 7px solid #777;
}

.sheet .doc-title {
    padding: 0;
    border: none;
    border-bottom: 1px solid #000;
    text-align: center;
    font-size: 16px;
}

.sheet .b {
    border: 1px solid #000;
}

.sheet .ctr {
    text-align: center;
    padding-left: 0;
    padding-right: 3px;
}

.sheet .rgt {
    text-align: right;
    padding-right: 2px;
}

.tint {
    background-color: #dfe4f3;
}

.sheet .grey {
    background-color: #d5d5d5;
}

.sheet .drawing {
    position: relative;
    padding: 0;
    overflow: visible;
    border: 1px solid #000;
    outline: 2px solid #4f6a94;
    outline-offset: -1px;
}

.drawing::after {
    content: "";
    position: absolute;
    right: -3px;
    bottom: -3px;
    width: 5px;
    height: 5px;
    background-color: #4f6a94;
    border: 1px solid #4f6a94;
}

.window {
    display: block;
}

.dim text {
    font-family: "Liberation Sans", sans-serif;
    font-size: 10px;
    font-weight: bold;
    fill: #222;
    text-anchor: middle;
}

.fname text {
    font-family: "Liberation Sans", sans-serif;
    font-size: 12px;
    fill: #8a8a8a;
    text-anchor: middle;
}

.sill {
    font-family: "Liberation Sans", "Noto Sans CJK SC", sans-serif;
    font-size: 9px;
    fill: #555;
}

.sheet-bar {
    height: 24px;
    flex: none;
    display: flex;
    align-items: flex-start;
    background-color: #f0f0f0;
    border-bottom: 1px solid #a8a8a8;
}

.nav-arrows {
    width: 92px;
    height: 22px;
    padding: 0 6px 0 7px;
    display: flex;
    align-items: center;
    justify-content: space-between;
    border-right: 1px solid #a8a8a8;
}

.sheet-tab {
    width: 55px;
    height: 22px;
    text-align: center;
    line-height: 21px;
    font-family: "DejaVu Sans", sans-serif;
    background-color: #fff;
    border-right: 1px solid #a8a8a8;
    border-bottom: 1px solid #a8a8a8;
    color: #444;
}

.sheet-add {
    width: 22px;
    margin-right: 478px;
    text-align: center;
    line-height: 21px;
    font-size: 14px;
    color: #555;
}

.hs-dots {
    width: 2px;
    height: 10px;
    margin-top: 7px;
    border-top: 2px dotted #555;
    border-bottom: 2px dotted #555;
    background: linear-gradient(#555, #555) center / 2px 2px no-repeat;
}

.hs-btn {
    width: 16px;
    height: 16px;
    margin: 4px 0 0 4px;
    display: flex;
    align-items: center;
    justify-content: center;
    background-color: #fff;
    border: 1px solid #b5b5b5;
}

.hs-btn i {
    width: 0;
    height: 0;
    border-top: 4px solid transparent;
    border-bottom: 4px solid transparent;
    border-right: 4px solid #555;
}

.hs-track {
    flex: 1;
    height: 16px;
    margin-top: 4px;
    background-color: #fff;
    border: 1px solid #b5b5b5;
    border-left: none;
}

/* status bar */
.status {
    height: 30px;
    flex: none;
    display: flex;
    align-items: center;
    background-color: #f0f0f0;
    border-top: 1px solid #fff;
    color: #444;
}

.status span {
    padding-right: 5px;
    margin-right: 4px;
    border-right: 1px solid #c4c4c4;
    line-height: 20px;
}

/* taskbar */
.taskbar {
    height: 30px;
    flex: none;
    display: flex;
    align-items: center;
    background-color: #1b2c3c;
    color: #eee;
}

.start {
    margin-left: 14px;
}

.edge {
    margin-left: 22px;
}

.folder {
    margin-left: 19px;
}

.qq {
    margin-left: 20px;
}

.task-active {
    width: 36px;
    height: 30px;
    margin-left: 11px;
    display: flex;
    align-items: center;
    justify-content: center;
    background-color: #33475a;
    border-bottom: 2px solid #7fb2dd;
}

.tray {
    flex: 1;
    min-width: 0;
    display: flex;
    align-items: center;
    height: 30px;
    white-space: nowrap;
}

.tray svg {
    flex: none;
}

.ime {
    width: 14px;
    height: 14px;
    flex: none;
    margin-left: 703px;
    text-align: center;
    line-height: 14px;
    font-weight: bold;
    background-color: #eee;
    color: #111;
}

.umbrella {
    margin-left: 86px;
}

.weather {
    flex: none;
    margin-left: 15px;
    margin-right: 11px;
    font-size: 14px;
}

.cloud {
    margin-left: 11px;
}

.batt {
    margin-left: 9px;
}

.spk {
    margin-left: 9px;
}

.wifi {
    margin-left: 13px;
}

.clock {
    flex: none;
    margin-left: 9px;
    font-size: 13px;
}

/* overlays */
.cursor {
    position: absolute;
    left: 472px;
    top: 461px;
}

.qr {
    position: absolute;
    left: 1203px;
    top: 670px;
}
```
